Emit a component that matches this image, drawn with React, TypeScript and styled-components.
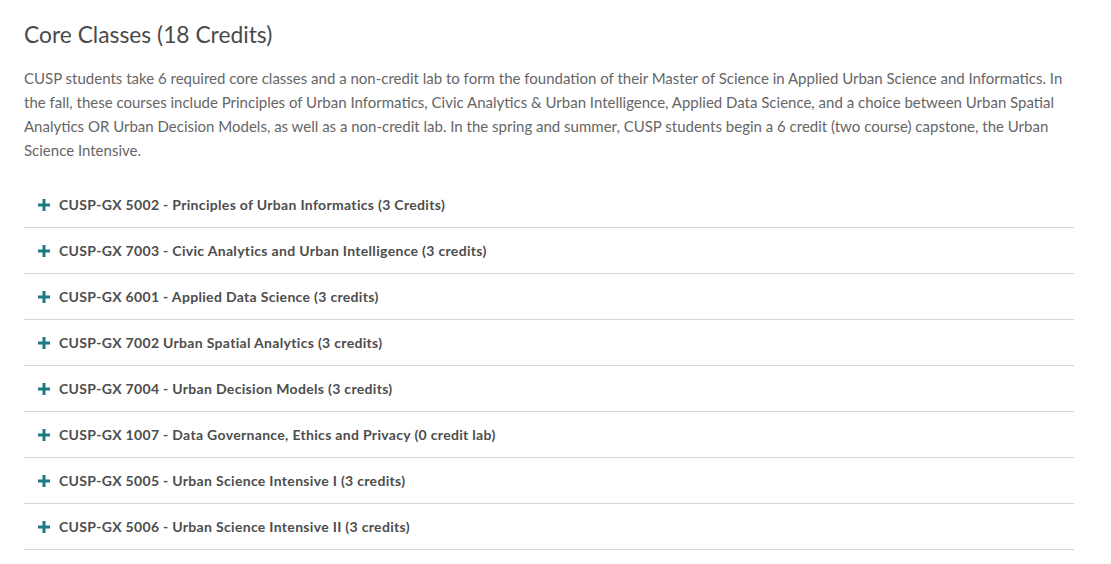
import styled, { createGlobalStyle } from "styled-components";

const GlobalStyle = createGlobalStyle`
  html, body {
    margin: 0;
    padding: 0;
    background: #fff;
  }
  body {
    font-family: Lato, "Liberation Sans", sans-serif;
  }
`;

const courses = [
  "CUSP-GX 5002 - Principles of Urban Informatics (3 Credits)",
  "CUSP-GX 7003 - Civic Analytics and Urban Intelligence (3 credits)",
  "CUSP-GX 6001 - Applied Data Science (3 credits)",
  "CUSP-GX 7002 Urban Spatial Analytics (3 credits)",
  "CUSP-GX 7004 - Urban Decision Models (3 credits)",
  "CUSP-GX 1007 - Data Governance, Ethics and Privacy (0 credit lab)",
  "CUSP-GX 5005 - Urban Science Intensive I (3 credits)",
  "CUSP-GX 5006 - Urban Science Intensive II (3 credits)",
];

const Page = styled.main`
  width: 1050px;
  padding: 20px 37px 0 24px;
`;

const Heading = styled.h2`
  margin: 0;
  font-size: 22.8px;
  font-weight: 400;
  line-height: 28px;
  color: #4a4a4a;
`;

const Intro = styled.p`
  margin: 18px 0 0;
  font-size: 15px;
  line-height: 24px;
  color: #666;
`;

const List = styled.div`
  margin-top: 20px;
  display: flex;
  flex-direction: column;
`;

const Row = styled.button`
  display: flex;
  align-items: center;
  gap: 9px;
  height: 46px;
  padding: 0 0 0 14px;
  background: none;
  border: none;
  border-bottom: 1px solid #d6d6d6;
  font-family: inherit;
  font-size: 14px;
  font-weight: 700;
  letter-spacing: 0.32px;
  color: #4d4d4d;
  text-align: left;
  cursor: pointer;
`;

const Plus = styled.svg`
  width: 12px;
  height: 12px;
  flex: none;
`;

function PlusIcon() {
  return (
    <Plus viewBox="0 0 12 12">
      <rect x="0" y="4.5" width="12" height="3" fill="#1f7b82" />
      <rect x="4.5" y="0" width="3" height="12" fill="#1f7b82" />
    </Plus>
  );
}

export default function App() {
  return (
    <>
      <GlobalStyle />
      <Page>
        <Heading>Core Classes (18 Credits)</Heading>
        <Intro>
          CUSP students take 6 required core classes and a non-credit lab to form the foundation of their
          Master of Science in Applied Urban Science and Informatics. In the fall, these courses include
          Principles of Urban Informatics, Civic Analytics &amp; Urban Intelligence, Applied Data Science, and a
          choice between Urban Spatial Analytics OR Urban Decision Models, as well as a non-credit lab. In the
          spring and summer, CUSP students begin a 6 credit (two course) capstone, the Urban Science Intensive.
        </Intro>
        <List>
          {courses.map((c) => (
            <Row key={c} type="button">
              <PlusIcon />
              {c}
            </Row>
          ))}
        </List>
      </Page>
    </>
  );
}
